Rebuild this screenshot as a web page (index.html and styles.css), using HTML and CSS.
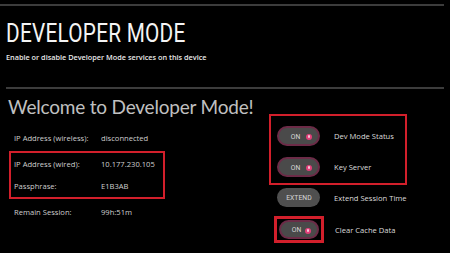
FILE: index.html
```html
<!DOCTYPE html>
<html>
<head>
<meta charset="utf-8">
<link rel="stylesheet" href="styles.css">
</head>
<body>
<div class="screen">
  <div class="topline"></div>
  <header class="header">
    <h1 class="title"><span class="title-text">DEVELOPER MODE</span></h1>
    <p class="subtitle">Enable or disable Developer Mode services on this device</p>
  </header>
  <div class="divider"></div>
  <h2 class="welcome">Welcome to Developer Mode!</h2>
  <div class="content">
    <div class="left">
      <div class="row first"><span class="label">IP Address (wireless):</span><span class="value">disconnected</span></div>
      <div class="redbox infobox">
        <div class="row"><span class="label">IP Address (wired):</span><span class="value">10.177.230.105</span></div>
        <div class="row"><span class="label">Passphrase:</span><span class="value">E1B3AB</span></div>
      </div>
      <div class="row"><span class="label">Remain Session:</span><span class="value">99h:51m</span></div>
    </div>
    <div class="right">
      <div class="redbox togglebox">
        <div class="ctrl-row"><div class="toggle"><span class="ton">ON</span><span class="dot"></span></div><span class="clabel">Dev Mode Status</span></div>
        <div class="ctrl-row"><div class="toggle"><span class="ton">ON</span><span class="dot"></span></div><span class="clabel">Key Server</span></div>
      </div>
      <div class="ctrl-row extend-row"><div class="btn"><span class="ton">EXTEND</span></div><span class="clabel">Extend Session Time</span></div>
      <div class="ctrl-row cache-row"><div class="redbox tight"><div class="toggle small"><span class="ton">ON</span><span class="dot"></span></div></div><span class="clabel">Clear Cache Data</span></div>
    </div>
  </div>
</div>
</body>
</html>
```

FILE: styles.css
```css
* { box-sizing: border-box; margin: 0; padding: 0; }
html, body { background: #000; }
body { width: 450px; height: 253px; overflow: hidden; font-family: "Open Sans", "Liberation Sans", sans-serif; color: #fff; }
.screen { padding-top: 4px; }
.topline { width: 444px; height: 2px; background: #3c3c3c; }
.header { padding-left: 6px; }
.title { height: 40px; padding-top: 11px; font-weight: 300; line-height: 26px; white-space: nowrap; }
.title-text { display: inline-block; font-family: Roboto, "Liberation Sans", sans-serif; font-weight: 400; font-size: 25.5px; letter-spacing: 0.3px; transform: scaleX(0.815); transform-origin: left center; color: #f4f4f4; }
.subtitle { margin-top: 6px; font-size: 7.3px; font-weight: 600; color: #e8e8e8; line-height: 10px; }
.divider { margin-top: 25px; margin-left: 6px; width: 438px; height: 2px; background: #3c3c3c; }
.welcome { margin-top: 5px; padding-left: 8px; font-family: Lato, "Open Sans", sans-serif; font-weight: 400; font-size: 19px; line-height: 26px; color: #c0c0c0; letter-spacing: -0.2px; }
.content { display: flex; }
.left { width: 269px; flex: none; padding-left: 9px; padding-top: 5px; }
.row { display: flex; align-items: center; height: 26px; font-size: 7.6px; color: #cfcfcf; padding-left: 5px; }
.row .label { width: 87px; }
.redbox { border: 2px solid #d21f2b; }
.infobox { width: 156px; height: 48px; padding-top: 0; }
.infobox .row { height: 22px; padding-left: 3px; }
.right { padding-top: 0; margin-top: -6px; }
.togglebox { width: 138px; height: 71px; padding: 10px 0 0 6px; display: flex; flex-direction: column; gap: 11px; }
.ctrl-row { display: flex; align-items: center; font-size: 7.6px; color: #dcdcdc; }
.toggle { width: 43px; height: 20px; border-radius: 10px; border: 2px solid #6c2b47; background: #4a4a4a; display: flex; align-items: center; position: relative; }
.ton { font-family: Roboto, "Liberation Sans", sans-serif; font-size: 8px; color: #d6d6d6; transform: scaleX(0.85); }
.toggle .ton { margin-left: 11px; }
.dot { position: absolute; right: 6px; top: 5.5px; width: 6px; height: 6px; border-radius: 50%; background: #e2407a; }
.dot::after { content: ""; position: absolute; left: 1.6px; top: 1.6px; width: 2.8px; height: 2.8px; border-radius: 50%; background: #f6c6d8; }
.togglebox .clabel { margin-left: 14px; }
.extend-row { margin-top: 3px; padding-left: 8px; }
.btn { width: 43px; height: 19px; border-radius: 10px; background: #4f4f4f; display: flex; align-items: center; justify-content: center; }
.extend-row .clabel { margin-left: 14px; }
.cache-row { margin-top: 9px; padding-left: 5px; }
.tight { border-width: 3px; padding: 1px 2px; }
.toggle.small { width: 40px; height: 19px; }
.toggle.small .ton { margin-left: 10px; }
.cache-row .clabel { margin-left: 11px; }
```
